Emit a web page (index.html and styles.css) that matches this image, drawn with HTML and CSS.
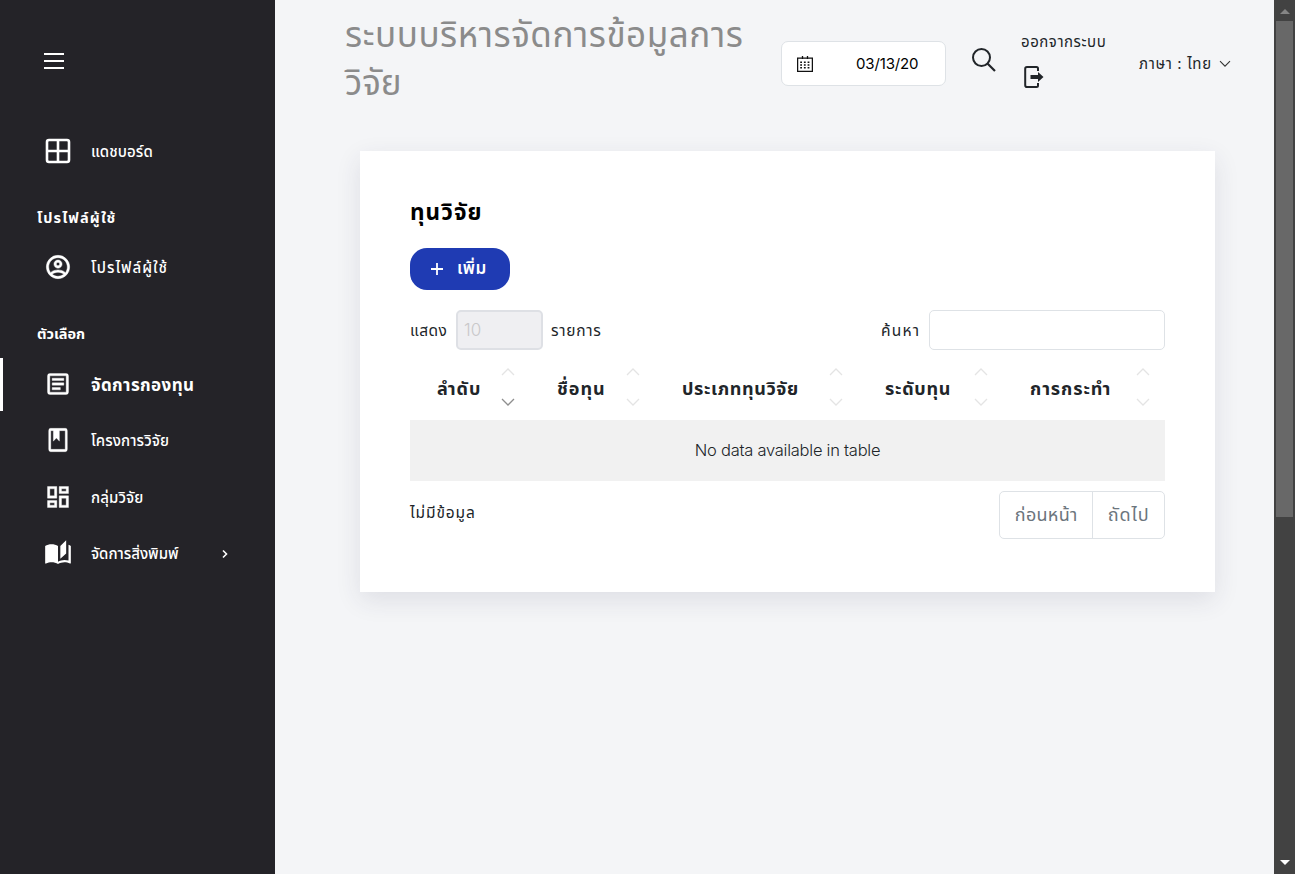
FILE: index.html
```html
<!DOCTYPE html>
<html lang="th">
<head>
<meta charset="utf-8">
<title>ทุนวิจัย</title>
<link rel="stylesheet" href="styles.css">
</head>
<body>
<div class="app">
  <nav class="sidebar">
    <div class="burger"><span></span><span></span><span></span></div>
    <a class="item dash"><svg viewBox="0 0 28 28"><path d="M5 3h18a2 2 0 0 1 2 2v18a2 2 0 0 1-2 2H5a2 2 0 0 1-2-2V5a2 2 0 0 1 2-2zM14 3v22M3 14h22" fill="none" stroke="#fff" stroke-width="2.6"/></svg><span class="t1">แดชบอร์ด</span></a>
    <h2 class="group g1"><span>โปรไฟล์ผู้ใช้</span></h2>
    <a class="item"><svg viewBox="0 0 24 24"><path fill="#fff" stroke="#fff" stroke-width=".4" d="M12 2A10 10 0 0 0 2 12a10 10 0 0 0 10 10 10 10 0 0 0 10-10A10 10 0 0 0 12 2M7.07 18.28c.43-.9 3.05-1.78 4.93-1.78s4.5.88 4.93 1.78A7.9 7.9 0 0 1 12 20c-1.860 0-3.570-.64-4.930-1.720m11.290-1.450c-1.430-1.740-4.900-2.330-6.360-2.330s-4.930.59-6.360 2.330A7.930 7.930 0 0 1 4 12c0-4.410 3.590-8 8-8s8 3.590 8 8c0 1.820-.62 3.500-1.640 4.830M12 6c-1.940 0-3.500 1.560-3.500 3.500S10.060 13 12 13s3.500-1.560 3.500-3.500S13.940 6 12 6m0 5a1.500 1.500 0 0 1-1.500-1.500A1.500 1.500 0 0 1 12 8a1.500 1.500 0 0 1 1.500 1.500A1.500 1.500 0 0 1 12 11"/></svg><span class="t2">โปรไฟล์ผู้ใช้</span></a>
    <h2 class="group g2"><span>ตัวเลือก</span></h2>
    <a class="item active"><svg viewBox="0 0 24 24"><path fill="#fff" fill-rule="evenodd" stroke="#fff" stroke-width=".3" d="M5 3h14a2 2 0 0 1 2 2v14a2 2 0 0 1-2 2H5a2 2 0 0 1-2-2V5a2 2 0 0 1 2-2m0 2v14h14V5zM7 7h10v2H7zm0 4h10v2H7zm0 4h7v2H7z"/></svg><span class="t3">จัดการกองทุน</span></a>
    <a class="item"><svg viewBox="0 0 24 24"><path fill="#fff" fill-rule="evenodd" stroke="#fff" stroke-width=".3" d="M4 2h16a2 2 0 0 1 2 2v16a2 2 0 0 1-2 2H4a2 2 0 0 1-2-2V4a2 2 0 0 1 2-2m.3 2v16h15.400V4H13.500v9l-3.200-2.800L7 13V4z" transform="translate(2.400 0) scale(.8 1)"/></svg><span class="t4">โครงการวิจัย</span></a>
    <a class="item"><svg viewBox="0 0 24 24"><path fill="#fff" fill-rule="evenodd" stroke="#fff" stroke-width=".3" d="M3 3h8v10H3zm2 2v6h4V5zm8-2h8v6h-8zm2 2v2h4V5zM3 15h8v6H3zm2 2v2h4v-2zm8-6h8v10h-8zm2 2v6h4v-6z"/></svg><span class="t5">กลุ่มวิจัย</span></a>
    <a class="item"><svg viewBox="0 0 24 24"><path fill="#fff" d="M19 1l-5 5v11l5-4.500zm2 4v13.500c-1.100-.35-2.300-.5-3.500-.5-1.700 0-4.150.65-5.500 1.500V6C10.550 4.900 8.450 4.500 6.500 4.500S2.450 4.900 1 6v14.650c0 .25.25.5.5.5.1 0 .15-.05.25-.05C3.100 20.450 5.050 20 6.500 20c1.950 0 4.050.4 5.500 1.500 1.350-.85 3.800-1.500 5.500-1.500 1.650 0 3.350.3 4.750 1.050.1.050.15.050.25.050.25 0 .5-.25.5-.5V6c-.6-.45-1.250-.75-2-1"/></svg><span class="t6">จัดการสิ่งพิมพ์</span><svg class="chev" viewBox="0 0 8 10"><path d="M2 1.500L5.500 5 2 8.500" fill="none" stroke="#fff" stroke-width="1.600"/></svg></a>
  </nav>
  <main class="main">
    <header class="top">
      <h1><span class="l1">ระบบบริหารจัดการข้อมูลการ</span><br><span class="l2">วิจัย</span></h1>
      <div class="date"><svg viewBox="0 0 16 16"><path d="M.6 2.100h14.800v13.300H.6zM5.500 0v3M10.500 0v3" fill="none" stroke="#111" stroke-width="1.300"/><path d="M3.200 6.200h9.200M3.200 9h9.200M3.200 11.800h9.200" stroke="#111" stroke-width="1.500" stroke-dasharray="1.800 1.900" fill="none"/></svg><span>03/13/20</span></div>
      <svg class="search" viewBox="0 0 24 24"><circle cx="9.500" cy="9.500" r="8.500" fill="none" stroke="#212529" stroke-width="2"/><path d="M15.700 15.700L23 23" stroke="#212529" stroke-width="2.200"/></svg>
      <div class="logout"><span>ออกจากระบบ</span><svg viewBox="0 0 20 22"><path d="M14 5V2.500Q14 1 12.500 1H3Q1.200 1 1.200 2.800v16.400Q1.200 21 3 21h9.500q1.500 0 1.500-1.500V17" fill="none" stroke="#212529" stroke-width="2"/><path d="M6.500 9h7.500V6l5.500 5-5.500 5v-3H6.500z" fill="#212529"/></svg></div>
      <div class="lang"><span>ภาษา : ไทย</span><svg viewBox="0 0 12 8"><path d="M1 1.200l5 5 5-5" fill="none" stroke="#333" stroke-width="1.100"/></svg></div>
    </header>
    <section class="card">
      <h3><span>ทุนวิจัย</span></h3>
      <a class="add"><svg viewBox="0 0 14 14"><path d="M7 1v12M1 7h12" stroke="#fff" stroke-width="1.800"/></svg><span>เพิ่ม</span></a>
      <div class="controls">
        <span class="show">แสดง</span><span class="select">10</span><span class="items">รายการ</span>
        <span class="find">ค้นหา</span><span class="field"></span>
      </div>
      <div class="thead">
        <div class="th sorted"><span>ลำดับ</span><svg viewBox="0 0 14 38"><path class="up" d="M1 7l6-6 6 6"/><path class="dn" d="M1 31l6 6 6-6"/></svg></div>
        <div class="th"><span>ชื่อทุน</span><svg viewBox="0 0 14 38"><path class="up" d="M1 7l6-6 6 6"/><path class="dn" d="M1 31l6 6 6-6"/></svg></div>
        <div class="th"><span>ประเภททุนวิจัย</span><svg viewBox="0 0 14 38"><path class="up" d="M1 7l6-6 6 6"/><path class="dn" d="M1 31l6 6 6-6"/></svg></div>
        <div class="th"><span>ระดับทุน</span><svg viewBox="0 0 14 38"><path class="up" d="M1 7l6-6 6 6"/><path class="dn" d="M1 31l6 6 6-6"/></svg></div>
        <div class="th"><span>การกระทำ</span><svg viewBox="0 0 14 38"><path class="up" d="M1 7l6-6 6 6"/><path class="dn" d="M1 31l6 6 6-6"/></svg></div>
      </div>
      <div class="empty"><span>No data available in table</span></div>
      <div class="foot">
        <span class="info">ไม่มีข้อมูล</span>
        <div class="pager"><a class="prev"><span>ก่อนหน้า</span></a><a class="next"><span>ถัดไป</span></a></div>
      </div>
    </section>
  </main>
  <div class="scrollbar"><i class="arrow-up"></i><div class="thumb"></div><i class="arrow-down"></i></div>
</div>
</body>
</html>
```
FILE: styles.css
```css
* { box-sizing: border-box; margin: 0; padding: 0; }
body { font-family: Inter, "Noto Sans Thai", "Noto Sans", sans-serif; color: #212529; overflow: hidden; }
span { white-space: nowrap; }
svg { flex: none; display: block; }
.app { display: flex; width: 1295px; height: 874px; background: #f4f5f7; }

.sidebar { width: 275px; background: #242328; color: #fff; padding-top: 53px; flex: none; }
.burger { width: 20px; height: 16px; margin-left: 44px; display: flex; flex-direction: column; justify-content: space-between; }
.burger span { height: 2px; background: #fff; }
.item { display: flex; align-items: center; height: 53px; padding-left: 44px; margin-bottom: 3.500px; font-size: 15px; font-weight: 500; line-height: 24px; border-left: 0 solid #fff; }
.item svg { width: 28px; height: 28px; margin: 0 19px 2px 0; }
.item.dash { margin-top: 56px; margin-bottom: 0; }
.item.active { border-left-width: 3px; padding-left: 41px; font-size: 17px; font-weight: 700; }
.item .chev { width: 8px; height: 10px; margin: 0 46px 0 auto; }
.t1, .t4, .t5 { letter-spacing: .1px; }
.t2 { letter-spacing: 1.050px; }
.t3 { letter-spacing: .4px; }
.group { font-size: 14.500px; font-weight: 700; line-height: 24px; padding-left: 37px; }
.g1 { margin: 28px 0 11px; letter-spacing: 1.200px; }
.g2 { margin: 28px 0 12px; }

.main { width: 999px; flex: none; }
.top { height: 151px; display: flex; align-items: flex-start; padding-left: 70px; }
h1 { width: 436px; padding-top: 10px; font-size: 35px; line-height: 48px; font-weight: 400; color: #8b8b8b; }
.l1 { letter-spacing: .55px; }
.date { width: 165px; height: 45px; margin-top: 41px; background: #fff; border: 1px solid #dee2e6; border-radius: 7px; display: flex; align-items: center; padding-left: 15px; color: #000; font-size: 15px; letter-spacing: -.15px; }
.date svg { width: 16px; height: 16px; margin-right: 43px; }
.search { width: 24px; height: 24px; margin: 48px 0 0 26px; }
.logout { width: 83px; margin: 31px 0 0 25px; font-size: 15px; line-height: 21px; letter-spacing: .55px; display: flex; flex-direction: column; }
.logout svg { width: 20px; height: 22px; margin: 14px 0 0 3px; }
.lang { margin: 52px 0 0 35px; display: flex; align-items: center; font-size: 15px; line-height: 24px; letter-spacing: .65px; }
.lang span { width: 72px; }
.lang svg { width: 12px; height: 8px; margin-left: 8px; }

.card { width: 855px; height: 441px; margin-left: 85px; background: #fff; padding: 47px 50px 0; box-shadow: 0 8px 24px rgba(50, 50, 80, .11); }
h3 { font-size: 22.500px; line-height: 28px; font-weight: 700; color: #000; letter-spacing: 1.100px; }
.add { width: 100px; height: 42px; margin-top: 22px; border-radius: 17px; background: #1f3bb3; color: #fff; display: flex; align-items: center; padding-left: 20px; font-size: 17px; font-weight: 600; letter-spacing: .5px; }
.add svg { width: 14px; height: 14px; margin-right: 13px; }
.controls { display: flex; align-items: center; height: 40px; margin-top: 20px; font-size: 15.500px; }
.show, .items, .find { padding-top: 2px; }
.show { width: 46px; letter-spacing: .5px; }
.select { width: 87px; height: 40px; border: 2px solid #dee0e5; border-radius: 5px; background: #efeff2; color: #c9c8ca; font-size: 17px; font-weight: 300; line-height: 36px; padding-left: 6px; }
.items { margin-left: 8px; letter-spacing: .7px; }
.find { margin-left: auto; width: 38px; letter-spacing: 1.200px; }
.field { width: 236px; height: 40px; margin-left: 10px; border: 1px solid #dee2e6; border-radius: 5px; }
.thead { display: grid; grid-template-columns: 112px 125px 203px 145px 170px; height: 70px; font-size: 18px; font-weight: 700; line-height: 26px; }
.th { display: flex; align-items: center; justify-content: flex-end; padding-top: 8px; letter-spacing: 1px; }
.th span { margin-right: auto; padding-left: 35px; }
.th.sorted span { padding-left: 27px; }
.th:nth-child(3) { letter-spacing: .6px; }
.th:nth-child(4) { letter-spacing: .7px; }
.th:nth-child(5) { letter-spacing: .9px; }
.th svg { width: 14px; height: 38px; margin: 0 7px 4px 0; }
.th:last-child svg { margin-right: 15px; }
.th path { fill: none; stroke: #e4e4e4; stroke-width: 1.300; }
.th.sorted .dn { stroke: #8e8e8e; }
.empty { height: 61px; background: #f1f1f1; display: flex; align-items: center; justify-content: center; font-size: 16.500px; font-weight: 300; letter-spacing: -.25px; padding-bottom: 1px; }
.foot { display: flex; justify-content: space-between; margin-top: 10px; }
.info { font-size: 15.500px; line-height: 24px; margin-top: 10px; letter-spacing: .9px; }
.pager { display: flex; height: 48px; width: 166px; border: 1px solid #dee2e6; border-radius: 5px; color: #6c757d; font-size: 18px; letter-spacing: .3px; }
.pager a { display: flex; align-items: center; justify-content: center; width: 93px; }
.pager .next { width: 72px; border-left: 1px solid #dee2e6; letter-spacing: 1px; }

.scrollbar { width: 21px; background: #424242; flex: none; display: flex; flex-direction: column; align-items: center; }
.thumb { width: 17px; height: 496px; background: #686868; margin-top: 7px; }
.arrow-up { margin-top: 9px; border: 5px solid transparent; border-top: 0; border-bottom-color: #858585; }
.arrow-down { margin-top: 343px; border: 5px solid transparent; border-bottom: 0; border-top-color: #fff; }
```
